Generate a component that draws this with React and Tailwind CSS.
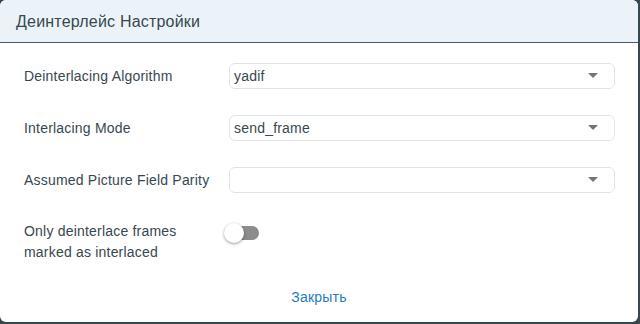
export default function App() {
  const font = { fontFamily: "'Liberation Sans', Arial, sans-serif" };
  const Select = ({ value }) => (
    <div className="flex-1 h-[26px] rounded-[6px] border border-[#dfe4ec] bg-white flex items-center justify-between pl-[4px] pr-[16px]">
      <span className="text-[14px] text-[#37474f]">{value}</span>
      <svg width="10" height="6" viewBox="0 0 10 6"><path d="M0 0 L10 0 L5 5 Z" fill="#6f7680" /></svg>
    </div>
  );
  return (
    <div className="w-[640px] h-[324px] bg-[#37474f] tracking-[0.2px]" style={font}>
      <div className="w-[638px] h-[322px] bg-white rounded-[6px] overflow-hidden flex flex-col">
        <div className="h-[43px] bg-[#ecf3f8] border-b border-[#4a5862] flex items-center px-[16px] pt-[1px]">
          <span className="text-[16px] text-[#37474f]">Деинтерлейс Настройки</span>
        </div>
        <div className="flex flex-col pl-[24px] pr-[23px] pt-[20px] gap-[26px]">
          <div className="flex items-center">
            <div className="w-[205px] text-[14px] text-[#37474f]">Deinterlacing Algorithm</div>
            <Select value="yadif" />
          </div>
          <div className="flex items-center">
            <div className="w-[205px] text-[14px] text-[#37474f]">Interlacing Mode</div>
            <Select value="send_frame" />
          </div>
          <div className="flex items-center">
            <div className="w-[205px] text-[14px] text-[#37474f]">Assumed Picture Field Parity</div>
            <Select value="" />
          </div>
          <div className="flex items-start">
            <div className="w-[200px] pr-[10px] pt-[2px] text-[14px] leading-[21px] text-[#37474f]">Only deinterlace frames marked as interlaced</div>
            <div className="relative w-[36px] h-[24px] ml-[0px] mt-[1px]">
              <div className="absolute left-[8px] top-[6px] w-[27px] h-[14px] rounded-full bg-[#8c8c8c]" />
              <div className="absolute left-0 top-[3px] w-[20px] h-[20px] rounded-full bg-white shadow-[0_1px_3px_rgba(0,0,0,0.4)]" />
            </div>
          </div>
        </div>
        <div className="flex justify-center mt-[24px]">
          <span className="text-[14px] text-[#1a7ec2]">Закрыть</span>
        </div>
      </div>
    </div>
  );
}
